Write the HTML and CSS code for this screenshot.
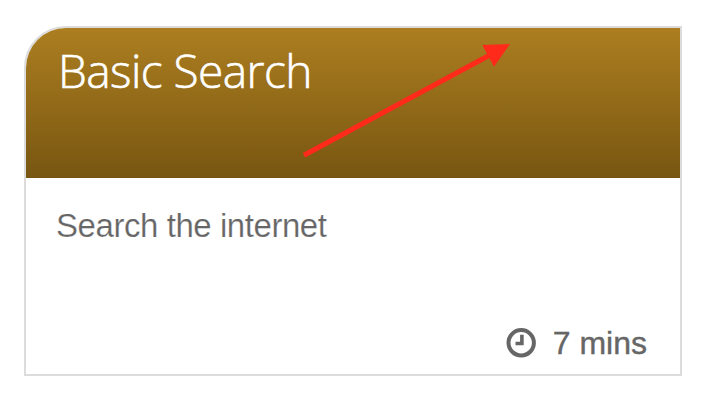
FILE: index.html
```html
<!DOCTYPE html>
<html lang="en">
<head>
<meta charset="utf-8">
<title>Basic Search</title>
<link rel="stylesheet" href="styles.css">
</head>
<body>
<article class="card">
  <header class="card-header"><h1 class="title">Basic Search</h1></header>
  <div class="card-body">
    <p class="description">Search the internet</p>
    <footer class="duration">
      <svg class="clock" viewBox="0 0 30 30" aria-hidden="true"><circle cx="15.2" cy="14.8" r="12.7"/><path d="M15.9 6.8v8.7H9.5"/></svg>
      <span class="minutes">7 mins</span>
    </footer>
  </div>
  <svg class="arrow" viewBox="0 0 210 120" aria-hidden="true"><path class="shaft" d="M4 114.3L189 14.5"/><path class="head" d="M210 3L182.3 4L194 25.7Z"/></svg>
</article>
</body>
</html>
```
FILE: styles.css
```css
* { box-sizing: border-box; }
body { margin: 0; padding: 26px 0 0 24px; background: #fff; }
.card { position: relative; display: flex; flex-direction: column; width: 658px; height: 350px; border: 2px solid #dcdcdc; border-top-left-radius: 42px; overflow: hidden; }
.card-header { height: 150px; flex: none; padding: 10px 0 0 32px; background: linear-gradient(#ac7e20, #785611); }
.title { margin: 0; color: #fff; font: 300 46px/64px "Open Sans", sans-serif; letter-spacing: -.55px; white-space: nowrap; -webkit-text-stroke: .6px #fff; }
.card-body { flex: 1; display: flex; flex-direction: column; justify-content: space-between; padding: 28px 33px 12px 31px; color: #666; font: 32px/38px "Liberation Sans", sans-serif; }
.description { margin: 0 0 0 -1px; font-size: 33px; line-height: 39px; letter-spacing: -.44px; -webkit-text-stroke: .2px #fff; }
.duration { display: flex; align-items: center; justify-content: flex-end; }
.clock { width: 30px; height: 30px; margin-right: 17px; fill: none; stroke: #666; stroke-width: 4; }
.clock path { stroke-width: 3.6; }
.minutes { -webkit-text-stroke: .4px #666; }
.arrow { position: absolute; left: 274px; top: 13px; width: 210px; height: 120px; }
.shaft { fill: none; stroke: #ff2a1a; stroke-width: 5; }
.head { fill: #ff2a1a; }
```
